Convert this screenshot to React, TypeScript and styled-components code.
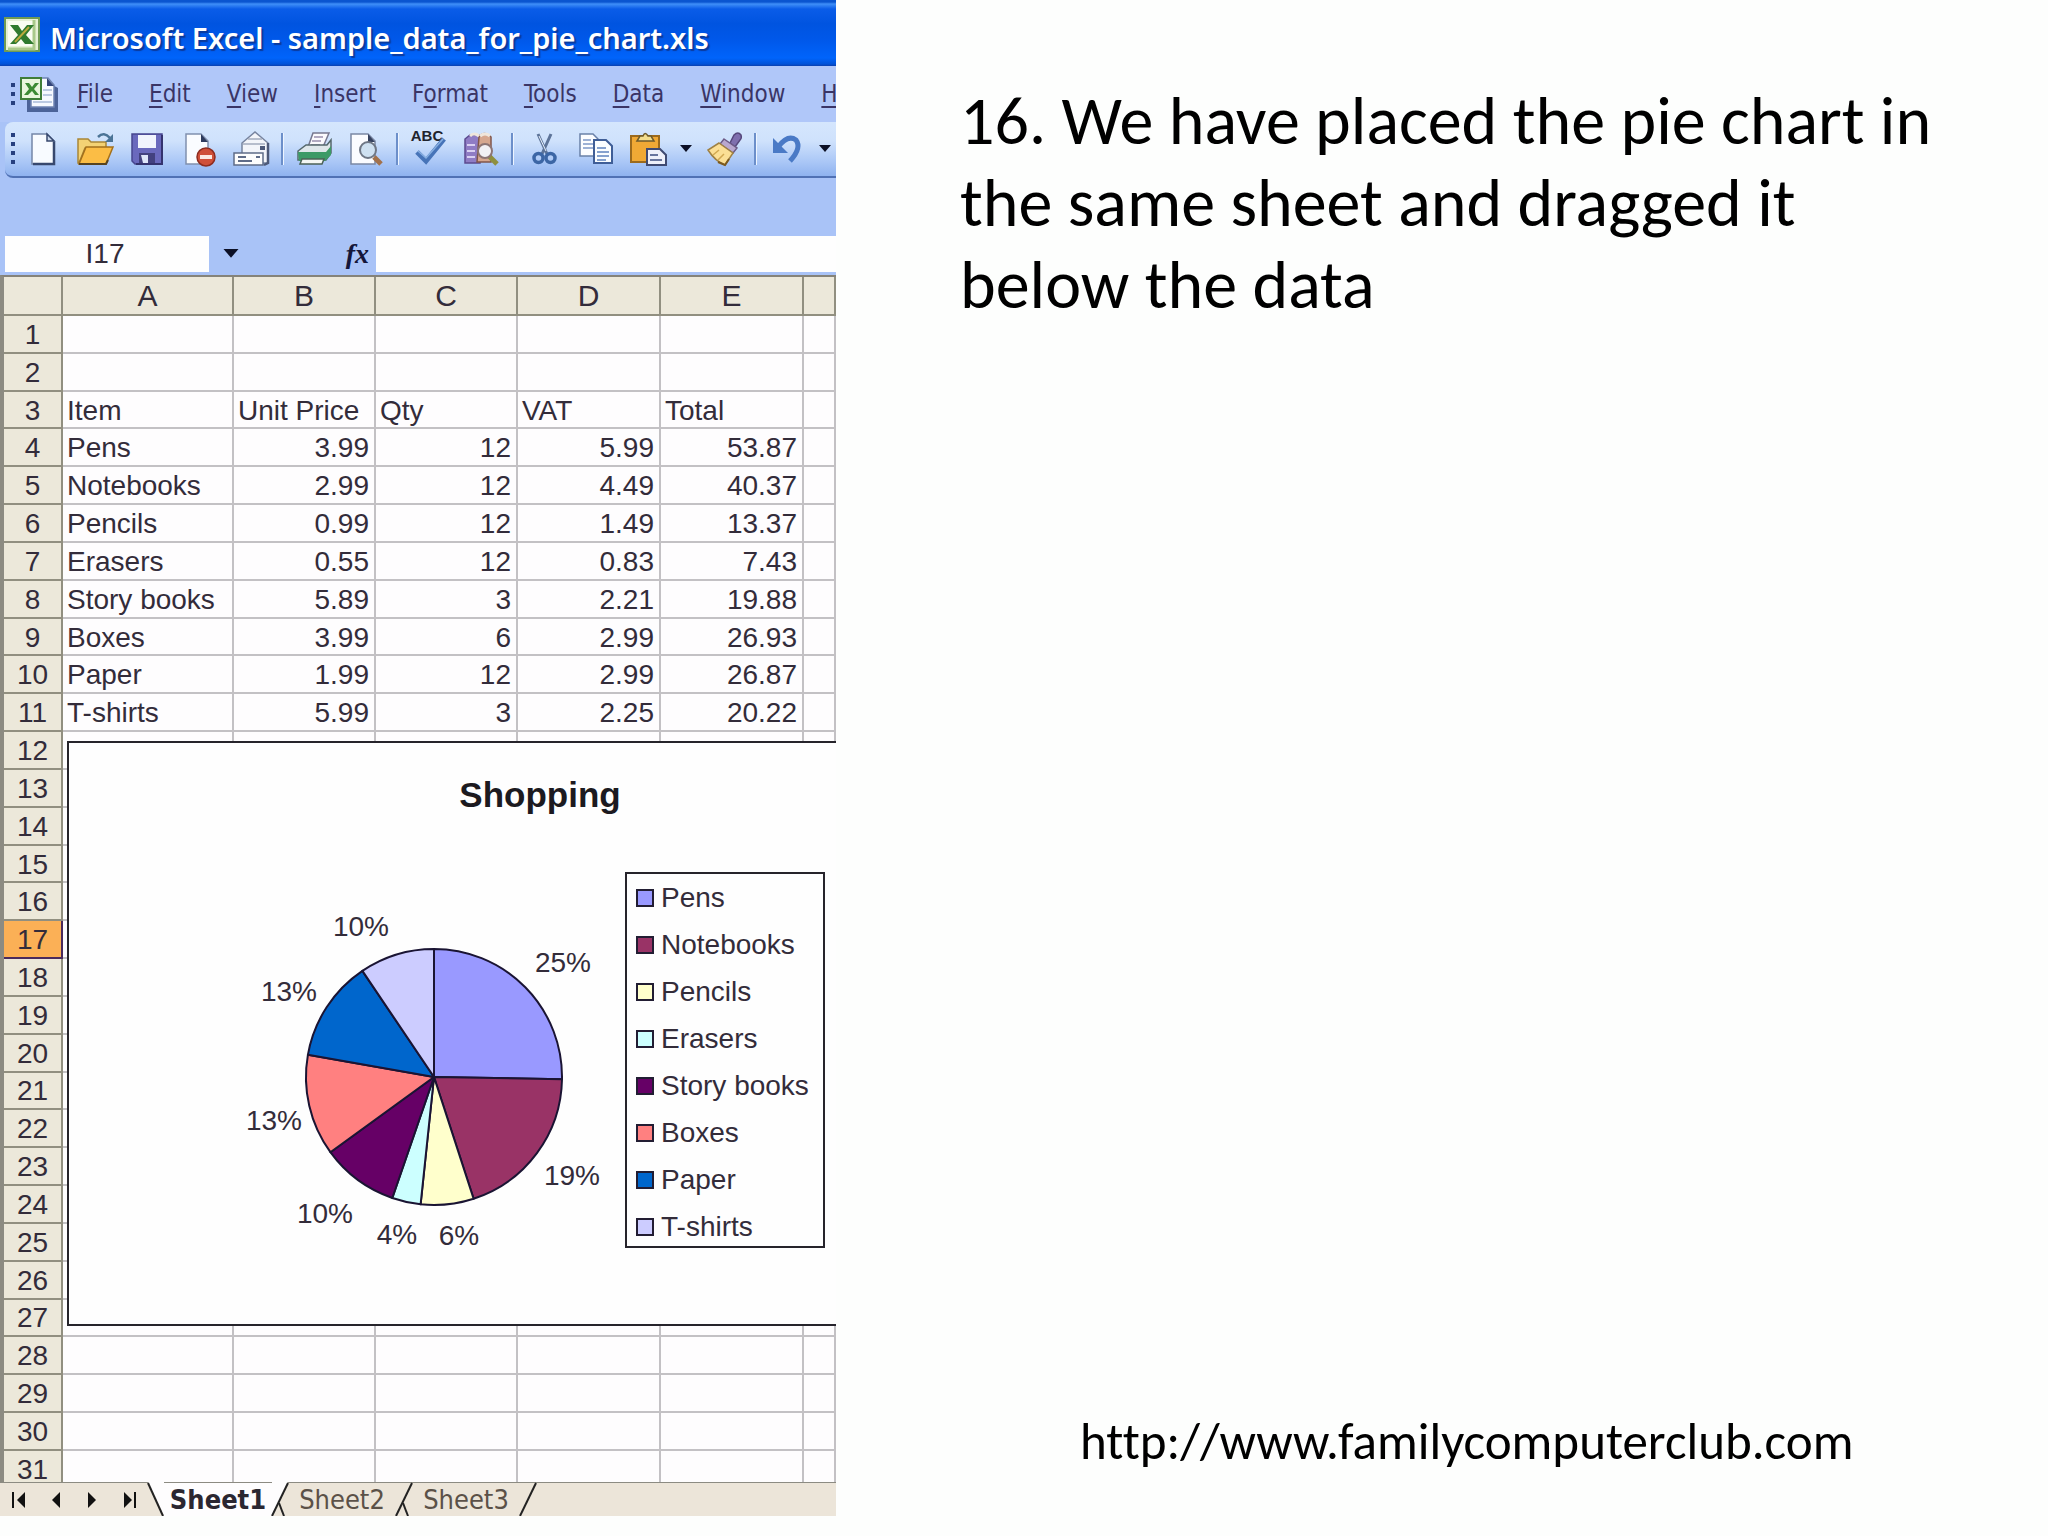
import React from "react";
import styled, { createGlobalStyle, css } from "styled-components";

const arial = `"Liberation Sans", Arial, sans-serif`;
const tahoma = `"DejaVu Sans Condensed", "DejaVu Sans", Tahoma, sans-serif`;
const ink = "#332c3a";

const GlobalStyle = createGlobalStyle`
  *, *::before, *::after { box-sizing: border-box; }
  body { margin: 0; background: #fdfefd; }
  button, input { font: inherit; color: inherit; border: 0; padding: 0; margin: 0; background: none; border-radius: 0; }
`;

const Slide = styled.main`
  display: grid;
  grid-template-columns: minmax(0, 209fr) minmax(0, 303fr);
  height: 100vh;
`;

const ExcelWindow = styled.section`
  display: flex;
  flex-direction: column;
  min-width: 0;
  margin-bottom: 20px;
  overflow: hidden;
  background: #a9c3f7;
  font-family: ${arial};
  color: ${ink};
`;

const TitleBar = styled.header`
  display: flex;
  flex: none;
  align-items: center;
  gap: 10px;
  height: 66px;
  padding: 4px 4px 0;
  background: linear-gradient(#0a55d0 0, #0a55d0 2px, #3f8ff8 4px, #0a5ce8 9px, #0054e0 24px, #0058ea 40px, #0064fb 58px, #0052d8 64px, #0a3fae 66px);
`;

const WindowTitle = styled.h1`
  margin: 0;
  padding-top: 6px;
  font: 600 29px/40px "Noto Sans", sans-serif;
  color: #fff;
  white-space: nowrap;
  text-shadow: 2px 2px 1px #0b3a9c;
`;

const Icon = styled.svg`
  display: block;
  flex: none;
  overflow: visible;
`;

const Grip = styled.span<{ $dots: number }>`
  flex: none;
  width: 4px;
  height: ${(p) => p.$dots * 9 - 4}px;
  background: repeating-linear-gradient(#27407f 0, #27407f 4px, transparent 4px, transparent 9px);
`;

const MenuBar = styled.nav`
  display: flex;
  flex: none;
  align-items: center;
  height: 56px;
  padding-left: 11px;
  background: #b0c7f9;
`;

const BookIcon = styled(Icon)`
  margin: 0 0 0 4px;
`;

const MenuButton = styled.button`
  flex: none;
  padding: 0 18px;
  font: 24px/32px ${tahoma};
  color: #3a3566;
  white-space: nowrap;
  u { text-underline-offset: 4px; text-decoration-thickness: 2px; }
`;

const ToolBar = styled.div`
  display: flex;
  flex: none;
  align-items: center;
  height: 56px;
  margin-left: 5px;
  padding-left: 6px;
  border-bottom: 2px solid #5071b4;
  border-radius: 8px 0 0 8px;
  background: linear-gradient(#d5e6fd, #cfe2fc 35%, #a9c6f6 75%, #8fb2ef);
`;

const Tools = styled.div`
  display: flex;
  align-items: center;
  padding-left: 2px;
`;

const ToolButton = styled.button`
  display: flex;
  flex: none;
  align-items: center;
  justify-content: center;
  width: 52px;
  height: 48px;
`;

const MoreButton = styled(ToolButton)`
  width: 24px;
`;

const Divider = styled.span`
  flex: none;
  width: 3px;
  height: 32px;
  margin: 0 4px;
  background: linear-gradient(90deg, #6c8fca 0, #6c8fca 2px, #eef5ff 2px);
`;

const FormulaBar = styled.div`
  display: flex;
  flex: none;
  align-items: stretch;
  height: 97px;
  padding: 58px 0 3px 5px;
`;

const NameBox = styled.input`
  flex: none;
  width: 204px;
  padding-right: 4px;
  background: #fefefe;
  font-size: 28px;
  text-align: center;
`;

const NameArrow = styled.button`
  display: flex;
  flex: none;
  align-items: center;
  justify-content: center;
  width: 44px;
`;

const FxButton = styled.button`
  flex: 0 0 123px;
  padding-right: 7px;
  font: italic bold 28px/36px "Liberation Serif", serif;
  color: #14163a;
  text-align: right;
`;

const FormulaInput = styled.input`
  flex: 1;
  min-width: 0;
  background: #fefefe;
`;

const Sheet = styled.div`
  position: relative;
  flex: 1;
  min-height: 0;
  overflow: hidden;
  border-top: 2px solid #85837a;
  border-left: 4px solid #8c8b82;
  background: #fefdfe;
`;

const Cells = styled.table`
  width: 100%;
  height: 1212px;
  table-layout: fixed;
  border-collapse: separate;
  border-spacing: 0;
  font-size: 28px;
  line-height: 32px;
`;

const Col = styled.col<{ $w?: number }>`
  width: ${(p) => (p.$w ? `${p.$w}px` : "auto")};
`;

const headerCell = css`
  padding: 0;
  border: solid #918f80;
  border-width: 0 2px 2px 0;
  background: #ece8da;
  font-weight: 400;
  text-align: center;
`;

const ColumnHead = styled.th`
  ${headerCell}
  height: 39px;
  font-size: 30px;
`;

const RowHead = styled.th<{ $active: boolean }>`
  ${headerCell}
  padding-top: 2px;
  ${(p) => p.$active && css`
    border-color: #4a2a5c;
    background: #fbb056;
  `}
`;

const Cell = styled.td<{ $right: boolean }>`
  padding: 2px 5px 0 4px;
  border: solid #c3c1c4;
  border-width: 0 2px 2px 0;
  text-align: ${(p) => (p.$right ? "right" : "left")};
  white-space: nowrap;
`;

const Chart = styled.figure`
  position: absolute;
  top: 464px;
  left: 63px;
  width: 946px;
  height: 585px;
  margin: 0;
  border: 2px solid #26242b;
  background: #fefefe;
`;

const ChartTitle = styled.figcaption`
  height: 129px;
  padding-top: 32px;
  font-size: 35px;
  font-weight: 700;
  line-height: 40px;
  text-align: center;
  color: #1c1a20;
`;

const ChartBody = styled.div`
  display: flex;
  align-items: flex-start;
`;

const Pie = styled.svg`
  flex: none;
  width: 540px;
  height: 400px;
  margin-right: 16px;
  font: 28px ${arial};
  text-anchor: middle;
`;

const Legend = styled.ul`
  display: flex;
  flex: none;
  flex-direction: column;
  width: 200px;
  height: 376px;
  margin: 0;
  padding: 0 0 0 9px;
  border: 2px solid #26242b;
  list-style: none;
`;

const LegendItem = styled.li`
  display: flex;
  flex: 0 0 47px;
  align-items: center;
  gap: 7px;
  font-size: 28px;
  line-height: 32px;
  white-space: nowrap;
`;

const Swatch = styled.span<{ $fill: string }>`
  flex: none;
  width: 18px;
  height: 18px;
  border: 2px solid #221d33;
  background: ${(p) => p.$fill};
`;

const TabBar = styled.footer`
  display: flex;
  flex: none;
  height: 34px;
  border-top: 1px solid #8c8b82;
  background: #ece5d9;
`;

const NavButton = styled.button`
  display: flex;
  flex: none;
  align-items: center;
  justify-content: center;
  width: 37px;
`;

const TabButton = styled.button<{ $active: boolean }>`
  flex: none;
  width: 108px;
  background: ${(p) => (p.$active ? "#fefdfe" : "transparent")};
  font: ${(p) => (p.$active ? 700 : 400)} 27px/32px ${tahoma};
  color: ${(p) => (p.$active ? "#2b2731" : "#5b5148")};
  text-align: center;
  white-space: nowrap;
`;

const Notes = styled.section`
  display: flex;
  flex-direction: column;
  align-items: flex-start;
  justify-content: space-between;
  min-width: 0;
  padding: 80px 90px 66px 124px;
  font-family: Carlito, Calibri, Lato, sans-serif;
  font-variant-ligatures: none;
  color: #000;
`;

const Step = styled.p`
  margin: 0;
  font-size: 68px;
  line-height: 82px;
`;

const SiteLink = styled.a`
  margin-left: 120px;
  font-size: 51px;
  line-height: 56px;
  color: inherit;
  text-decoration: none;
`;

const Down = () => (
  <Icon width="12" height="8" viewBox="0 0 12 8" aria-hidden="true">
    <path d="M0 0h12L6 7z" fill="#0c1026" />
  </Icon>
);

const glyphs: Record<string, React.ReactNode> = {
  New: (
    <>
      <path d="M7 3h15l7 7v23H7z" fill="#f8fbff" stroke="#7486a8" strokeWidth="1.5" />
      <path d="M29 11v22H8" fill="none" stroke="#37486e" strokeWidth="2.5" />
      <path d="M22 3v7h7z" fill="#c9d6ea" stroke="#37486e" strokeWidth="1.5" />
    </>
  ),
  Open: (
    <>
      <path d="M1 8h10l3 3h15v6H8L2 32H1z" fill="#f3d274" stroke="#a98636" strokeWidth="1.5" />
      <path d="M9 16h27l-7 17H2z" fill="#fbbd45" stroke="#a3701c" strokeWidth="1.5" />
      <path d="M2 33h27l2-4" fill="none" stroke="#57431f" strokeWidth="2" />
      <path d="M21 6q6-6 12 1" fill="none" stroke="#4b7496" strokeWidth="2.5" />
      <path d="M36 3v8h-8z" fill="#4b7496" />
    </>
  ),
  Save: (
    <>
      <path d="M3 3h30v30H6l-3-3z" fill="#6a69bd" stroke="#47468f" strokeWidth="1.5" />
      <path d="M9 4h18v13H9z" fill="#f1f4fd" />
      <path d="M10 22h16v11H10z" fill="#43417f" />
      <path d="M12 24h7v8h-5z" fill="#dfe6fa" />
      <path d="M33 4v29H7" fill="none" stroke="#34336f" strokeWidth="2" />
    </>
  ),
  Permission: (
    <>
      <path d="M5 3h15l7 7v23H5z" fill="#fafcff" stroke="#8090ae" strokeWidth="1.5" />
      <path d="M20 3l7 8h-7z" fill="#2d3b5e" />
      <circle cx="25" cy="26" r="9" fill="#cf4f38" stroke="#8d2c20" strokeWidth="1.5" />
      <path d="M19 24h12v4H19z" fill="#fbe9e2" />
    </>
  ),
  "E-mail": (
    <>
      <path d="M9 12L22 1l13 11v20H9z" fill="#f3f5fa" stroke="#77849f" strokeWidth="1.5" />
      <path d="M10 13h22M15 8h14" stroke="#a3abbd" strokeWidth="1.5" />
      <path d="M35 12v20l-4 2" fill="none" stroke="#4d5978" strokeWidth="2.5" />
      <path d="M27 15h5v4h-5z" fill="#4d5978" />
      <path d="M1 22h29v12H1z" fill="#fdfdfd" stroke="#5f6c88" strokeWidth="1.5" />
      <path d="M5 26h8M5 30h14M23 26h4" stroke="#5f6c88" strokeWidth="2" />
    </>
  ),
  Print: (
    <>
      <path d="M12 16L17 2h16l-6 14z" fill="#fbfafd" stroke="#77788f" strokeWidth="1.5" />
      <path d="M18 6h9M16 10h9M15 14h9" stroke="#9a90ad" strokeWidth="1.5" />
      <path d="M2 20l8-6h21l4-5v13l-5 7H2z" fill="#dfe7ea" stroke="#55686c" strokeWidth="1.5" />
      <path d="M2 21h28l5-6v9l-6 6H3z" fill="#3c9a66" />
      <path d="M6 28h22l-2 5H4z" fill="#f4f7f3" stroke="#4b6156" strokeWidth="1.5" />
    </>
  ),
  Preview: (
    <>
      <path d="M3 3h17l7 7v23H3z" fill="#fbfcff" stroke="#7b88a4" strokeWidth="1.5" />
      <path d="M20 3l7 8h-7z" fill="#35415e" />
      <path d="M26 26l7 7" stroke="#a2714b" strokeWidth="5" />
      <circle cx="20" cy="19" r="8" fill="#cfe1f1" stroke="#6f7785" strokeWidth="2" />
    </>
  ),
  Spelling: (
    <>
      <text x="16" y="10" textAnchor="middle" fontFamily="Liberation Sans, sans-serif" fontSize="15" fontWeight="700" fill="#20232c">ABC</text>
      <path d="M6 21l9 9L33 8" fill="none" stroke="#4774b8" strokeWidth="5" />
      <path d="M7 20l8 7L32 8" fill="none" stroke="#86aee0" strokeWidth="1.5" />
    </>
  ),
  Research: (
    <>
      <path d="M2 8l5-4h10v28H2z" fill="#8f7cc4" stroke="#5c4a8f" strokeWidth="1.5" />
      <path d="M4 14h8M4 20h8M4 26h8" stroke="#d9d0f2" strokeWidth="2" />
      <path d="M16 6q5-7 12 0v25H14z" fill="#d6a78f" stroke="#81564a" strokeWidth="1.5" />
      <path d="M7 5q4-4 9 0M17 5q5-4 10 0" stroke="#efe6dc" strokeWidth="3" fill="none" />
      <path d="M26 25l8 8" stroke="#8e8f3f" strokeWidth="5" />
      <circle cx="22" cy="20" r="7" fill="#f2f1f5" stroke="#8c7575" strokeWidth="2" />
    </>
  ),
  Cut: (
    <>
      <path d="M12 3l9 20M25 3l-9 20" stroke="#5d7499" strokeWidth="3" />
      <path d="M13 5l7 15" stroke="#e9f1fb" strokeWidth="1" />
      <circle cx="12.500" cy="27" r="4.500" fill="none" stroke="#3c66a5" strokeWidth="3.500" />
      <circle cx="24.500" cy="27" r="4.500" fill="none" stroke="#3c66a5" strokeWidth="3.500" />
    </>
  ),
  Copy: (
    <>
      <path d="M2 3h13l5 5v17H2z" fill="#fcfdff" stroke="#6a81a8" strokeWidth="1.5" />
      <path d="M5 9h8M5 13h10M5 17h10" stroke="#7d98c8" strokeWidth="1.5" />
      <path d="M16 9h12l6 6v17H16z" fill="#fafdff" stroke="#3f5e97" strokeWidth="2" />
      <path d="M19 17h9M19 21h12M19 25h12M19 29h9" stroke="#5f83bf" strokeWidth="1.5" />
    </>
  ),
  Paste: (
    <>
      <path d="M1 5h28v26H1z" fill="#f0a935" stroke="#9b6a1d" strokeWidth="2" />
      <path d="M7 10l3-5h3q2-5 5 0h3l3 5z" fill="#f3dd8c" stroke="#6c5a2c" strokeWidth="1.5" />
      <path d="M17 18h13l6 6v10H17z" fill="#eef0fa" stroke="#3f4a72" strokeWidth="2" />
      <path d="M20 24h8M20 29h12" stroke="#68759e" strokeWidth="2" />
    </>
  ),
  "Format Painter": (
    <>
      <path d="M24 12l4-8q4-4 7 0 1 3-1 5l-5 7z" fill="#7f6fae" stroke="#57487c" strokeWidth="1.5" />
      <path d="M18 8l13 9-4 5-13-9z" fill="#b8a7cf" stroke="#6c5a86" strokeWidth="1.5" />
      <path d="M13 12l14 10-8 12Q9 30 2 19z" fill="#fbdf95" stroke="#9f8143" strokeWidth="1.5" />
      <path d="M7 24l6-5M12 29l6-6" stroke="#d1a851" strokeWidth="1.5" />
      <path d="M12 31l7 3 4-6" fill="none" stroke="#7c5a20" strokeWidth="2" />
    </>
  ),
  Undo: (
    <>
      <path d="M9 16Q19 3 27 9q6 8-6 21" fill="none" stroke="#4a7ac6" strokeWidth="5" />
      <path d="M4 7v15h15z" fill="#4a7ac6" />
    </>
  ),
};

const toolGroups: string[][] = [
  ["New", "Open", "Save", "Permission", "E-mail"],
  ["Print", "Preview"],
  ["Spelling", "Research"],
  ["Cut", "Copy", "Paste", "Format Painter"],
  ["Undo"],
];
const withMenu = ["Paste", "Undo"];

const menus: [string, string, string][] = [
  ["", "F", "ile"],
  ["", "E", "dit"],
  ["", "V", "iew"],
  ["", "I", "nsert"],
  ["F", "o", "rmat"],
  ["", "T", "ools"],
  ["", "D", "ata"],
  ["", "W", "indow"],
  ["", "H", "elp"],
];

const columns = ["A", "B", "C", "D", "E", ""];
const activeRow = 17;

const data: Record<number, string[]> = {
  3: ["Item", "Unit Price", "Qty", "VAT", "Total"],
  4: ["Pens", "3.99", "12", "5.99", "53.87"],
  5: ["Notebooks", "2.99", "12", "4.49", "40.37"],
  6: ["Pencils", "0.99", "12", "1.49", "13.37"],
  7: ["Erasers", "0.55", "12", "0.83", "7.43"],
  8: ["Story books", "5.89", "3", "2.21", "19.88"],
  9: ["Boxes", "3.99", "6", "2.99", "26.93"],
  10: ["Paper", "1.99", "12", "2.99", "26.87"],
  11: ["T-shirts", "5.99", "3", "2.25", "20.22"],
};

// Each slice: name, colour, end angle in degrees, label and its place.
const slices = [
  { name: "Pens", fill: "#9999ff", end: 91, label: "25%", x: 563, y: 972 },
  { name: "Notebooks", fill: "#993366", end: 162, label: "19%", x: 572, y: 1185 },
  { name: "Pencils", fill: "#ffffcc", end: 186, label: "6%", x: 459, y: 1245 },
  { name: "Erasers", fill: "#ccffff", end: 199, label: "4%", x: 397, y: 1244 },
  { name: "Story books", fill: "#660066", end: 234, label: "10%", x: 325, y: 1223 },
  { name: "Boxes", fill: "#ff8080", end: 280, label: "13%", x: 274, y: 1130 },
  { name: "Paper", fill: "#0066cc", end: 326, label: "13%", x: 289, y: 1001 },
  { name: "T-shirts", fill: "#ccccff", end: 360, label: "10%", x: 361, y: 936 },
];

const CX = 434;
const CY = 1077;
const R = 128;

const rim = (deg: number) => {
  const a = (deg * Math.PI) / 180;
  return `${(CX + R * Math.sin(a)).toFixed(1)} ${(CY - R * Math.cos(a)).toFixed(1)}`;
};

const PieChart = () => (
  <Pie viewBox="69 872 540 400" role="img" aria-label="Shopping pie chart">
    {slices.map((s, i) => {
      const start = i ? slices[i - 1].end : 0;
      return (
        <path
          key={s.name}
          d={`M${CX} ${CY}L${rim(start)}A${R} ${R} 0 0 1 ${rim(s.end)}Z`}
          fill={s.fill}
          stroke="#1a1433"
          strokeWidth="2"
          strokeLinejoin="round"
        />
      );
    })}
    {slices.map((s) => (
      <text key={s.name} x={s.x} y={s.y} fill={ink}>{s.label}</text>
    ))}
  </Pie>
);

const navs: [string, string][] = [
  ["First sheet", "M7 1v16h2V1zM20 1v16l-8-8z"],
  ["Previous sheet", "M18 1v16l-8-8z"],
  ["Next sheet", "M9 1v16l8-8z"],
  ["Last sheet", "M8 1v16l8-8zM18 1v16h2V1z"],
];

const tabs = ["Sheet1", "Sheet2", "Sheet3"];

export default function App() {
  return (
    <Slide>
      <GlobalStyle />
      <ExcelWindow aria-label="Microsoft Excel">
        <TitleBar>
          <Icon width="36" height="36" viewBox="0 0 36 36" aria-hidden="true">
            <path d="M1 1h34v33H1z" fill="#e6f0d4" stroke="#6f9a55" strokeWidth="2" />
            <path d="M4 4h25v25H4z" fill="#fafdf2" />
            <path d="M30 3v29H4" fill="none" stroke="#a9c98a" strokeWidth="3" />
            <path d="M6 8h8l4 6 5-6h7l-8 10 8 9h-9l-4-5-5 5H6l8-9z" fill="#2f7a2e" />
            <path d="M25 10L11 25" stroke="#b9a93c" strokeWidth="2" />
          </Icon>
          <WindowTitle>Microsoft Excel - sample_data_for_pie_chart.xls</WindowTitle>
        </TitleBar>

        <MenuBar aria-label="Menu bar">
          <Grip $dots={3} />
          <BookIcon width="40" height="40" viewBox="0 0 40 40" aria-hidden="true">
            <path d="M8 8h20l11 6v24H8z" fill="#4c6399" />
            <path d="M12 4h17l6 7v22H12z" fill="#f6f9ff" stroke="#6d83b2" strokeWidth="1.500" />
            <path d="M28 4l7 8h-7z" fill="#33457a" />
            <path d="M24 16h9M24 21h9M14 28h19" stroke="#a9bad9" strokeWidth="1.500" />
            <path d="M2 4h20v21H2z" fill="#e9f6dd" stroke="#3f7d38" strokeWidth="2" />
            <path d="M6 9h4l3 4 3-4h4l-5 6 5 6h-4l-3-4-4 4H5l5-6z" fill="#3c8a34" />
          </BookIcon>
          {menus.map(([pre, key, post]) => (
            <MenuButton key={key + post} type="button">
              {pre}<u>{key}</u>{post}
            </MenuButton>
          ))}
        </MenuBar>

        <ToolBar role="toolbar" aria-label="Standard">
          <Grip $dots={4} />
          <Tools>
            {toolGroups.map((group, g) => (
              <React.Fragment key={g}>
                {g > 0 && <Divider />}
                {group.map((name) => (
                  <React.Fragment key={name}>
                    <ToolButton type="button" aria-label={name}>
                      <Icon width="36" height="36" viewBox="0 0 36 36" aria-hidden="true">{glyphs[name]}</Icon>
                    </ToolButton>
                    {withMenu.includes(name) && (
                      <MoreButton type="button" aria-label={`${name} options`}><Down /></MoreButton>
                    )}
                  </React.Fragment>
                ))}
              </React.Fragment>
            ))}
          </Tools>
        </ToolBar>

        <FormulaBar>
          <NameBox aria-label="Name box" defaultValue="I17" />
          <NameArrow type="button" aria-label="Choose a name">
            <Icon width="16" height="10" viewBox="0 0 12 8" aria-hidden="true">
              <path d="M0 0h12L6 7z" fill="#0c1026" />
            </Icon>
          </NameArrow>
          <FxButton type="button">fx</FxButton>
          <FormulaInput aria-label="Formula" />
        </FormulaBar>

        <Sheet>
          <Cells>
            <colgroup>
              <Col $w={59} />
              <Col $w={171} />
              <Col $w={142} />
              <Col $w={142} />
              <Col $w={143} />
              <Col $w={143} />
              <Col />
            </colgroup>
            <thead>
              <tr>
                <ColumnHead as="td" />
                {columns.map((c, i) => <ColumnHead key={i} scope="col">{c}</ColumnHead>)}
              </tr>
            </thead>
            <tbody>
              {Array.from({ length: 31 }, (_, i) => i + 1).map((n) => (
                <tr key={n}>
                  <RowHead scope="row" $active={n === activeRow}>{n}</RowHead>
                  {columns.map((_, c) => (
                    <Cell key={c} $right={n > 3 && c > 0}>{data[n]?.[c]}</Cell>
                  ))}
                </tr>
              ))}
            </tbody>
          </Cells>
          <Chart>
            <ChartTitle>Shopping</ChartTitle>
            <ChartBody>
              <PieChart />
              <Legend>
                {slices.map((s) => (
                  <LegendItem key={s.name}><Swatch $fill={s.fill} />{s.name}</LegendItem>
                ))}
              </Legend>
            </ChartBody>
          </Chart>
        </Sheet>

        <TabBar>
          {navs.map(([label, d]) => (
            <NavButton key={label} type="button" aria-label={label}>
              <Icon width="28" height="18" viewBox="0 0 28 18" aria-hidden="true"><path d={d} fill="#111" /></Icon>
            </NavButton>
          ))}
          <Icon width="16" height="33" viewBox="0 0 16 33" aria-hidden="true">
            <path d="M0-1h16v34z" fill="#fefdfe" />
            <path d="M0 0l15 33" stroke="#222" strokeWidth="2" />
          </Icon>
          {tabs.map((t, i) => (
            <React.Fragment key={t}>
              <TabButton type="button" $active={i === 0}>{t}</TabButton>
              <Icon width="16" height="33" viewBox="0 0 16 33" aria-hidden="true">
                {i === 0 && <path d="M0-1h16L0 33z" fill="#fefdfe" />}
                <path d="M16 0L0 33" stroke="#222" strokeWidth="2" />
                {i < 2 && <path d="M7 20l5 13" stroke="#222" strokeWidth="2" />}
              </Icon>
            </React.Fragment>
          ))}
        </TabBar>
      </ExcelWindow>

      <Notes>
        <Step>16. We have placed the pie chart in the same sheet and dragged it below the data</Step>
        <SiteLink href="http://www.familycomputerclub.com">http://www.familycomputerclub.com</SiteLink>
      </Notes>
    </Slide>
  );
}
